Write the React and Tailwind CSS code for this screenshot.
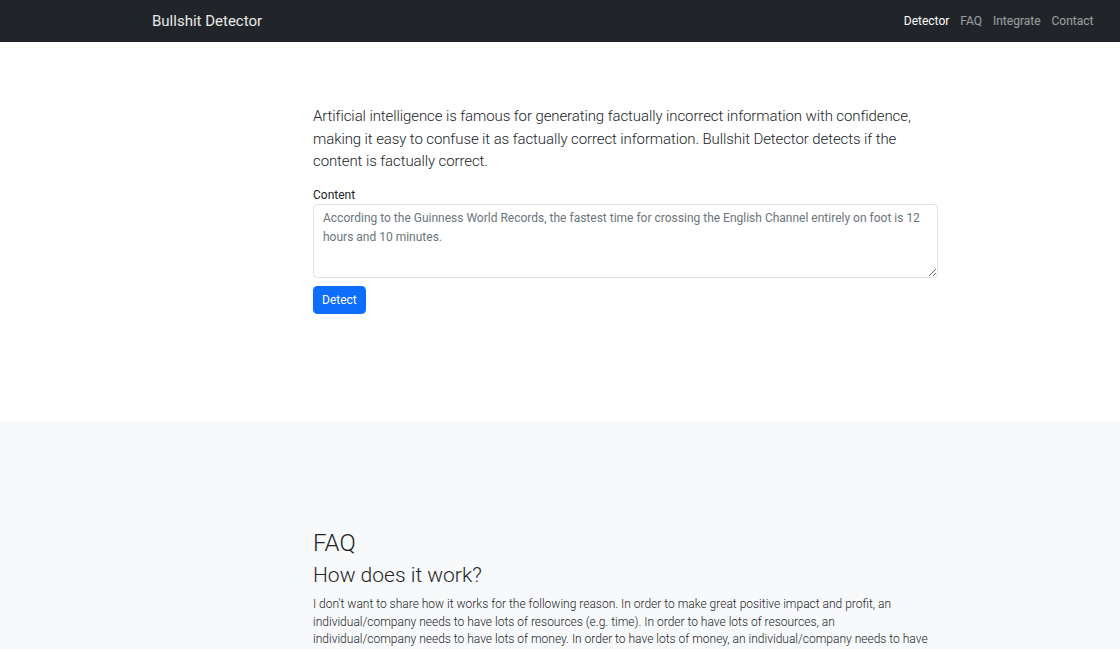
const App = () => {
  return (
    <div
      className="h-[652px] overflow-hidden bg-white text-[#212529]"
      style={{ fontFamily: "Roboto, 'Liberation Sans', sans-serif" }}
    >
      <nav className="h-[42px] bg-[#212529] flex items-center justify-between pl-[152px] pr-[21px]">
        <a className="text-[15px] text-white/90" href="#">
          Bullshit Detector
        </a>
        <ul className="flex text-[12px]">
          <li>
            <a className="px-[5.5px] text-white" href="#">
              Detector
            </a>
          </li>
          <li>
            <a className="px-[5.5px] text-white/55" href="#">
              FAQ
            </a>
          </li>
          <li>
            <a className="px-[5.5px] text-white/55" href="#">
              Integrate
            </a>
          </li>
          <li>
            <a className="px-[5.5px] text-white/55" href="#">
              Contact
            </a>
          </li>
        </ul>
      </nav>

      <section className="h-[379px] pt-[63px]">
        <div className="w-[625px] ml-[313px]">
          <p className="text-[15px] leading-[22.7px] font-light tracking-[-0.1px]">
            Artificial intelligence is famous for generating factually incorrect
            information with confidence, making it easy to confuse it as
            factually correct information. Bullshit Detector detects if the
            content is factually correct.
          </p>
          <div className="mt-[13px]">
            <label className="block text-[12px] leading-[18px]">Content</label>
            <textarea
              className="block w-full h-[74px] border border-[#dee2e6] rounded-[4.5px] px-[9px] py-[4px] text-[12px] leading-[18.5px] placeholder:text-[#6c757d] outline-none resize-y"
              placeholder="According to the Guinness World Records, the fastest time for crossing the English Channel entirely on foot is 12 hours and 10 minutes."
            />
          </div>
          <button className="mt-[8px] h-[28px] px-[9px] rounded-[4.5px] bg-[#0d6efd] text-white text-[12px]">
            Detect
          </button>
        </div>
      </section>

      <section className="bg-[#f8f9fa] pt-[108px]">
        <div className="w-[625px] ml-[313px]">
          <h2 className="text-[24px] leading-[29px] font-light">FAQ</h2>
          <h3 className="mt-[5px] text-[21px] leading-[25px] font-light">How does it work?</h3>
          <p className="mt-[8px] text-[12px] leading-[17.5px] font-light">
            I don't want to share how it works for the following reason. In order
            to make great positive impact and profit, an individual/company needs
            to have lots of resources (e.g. time). In order to have lots of
            resources, an individual/company needs to have lots of money. In
            order to have lots of money, an individual/company needs to have
          </p>
        </div>
      </section>
    </div>
  );
};

export default App;
